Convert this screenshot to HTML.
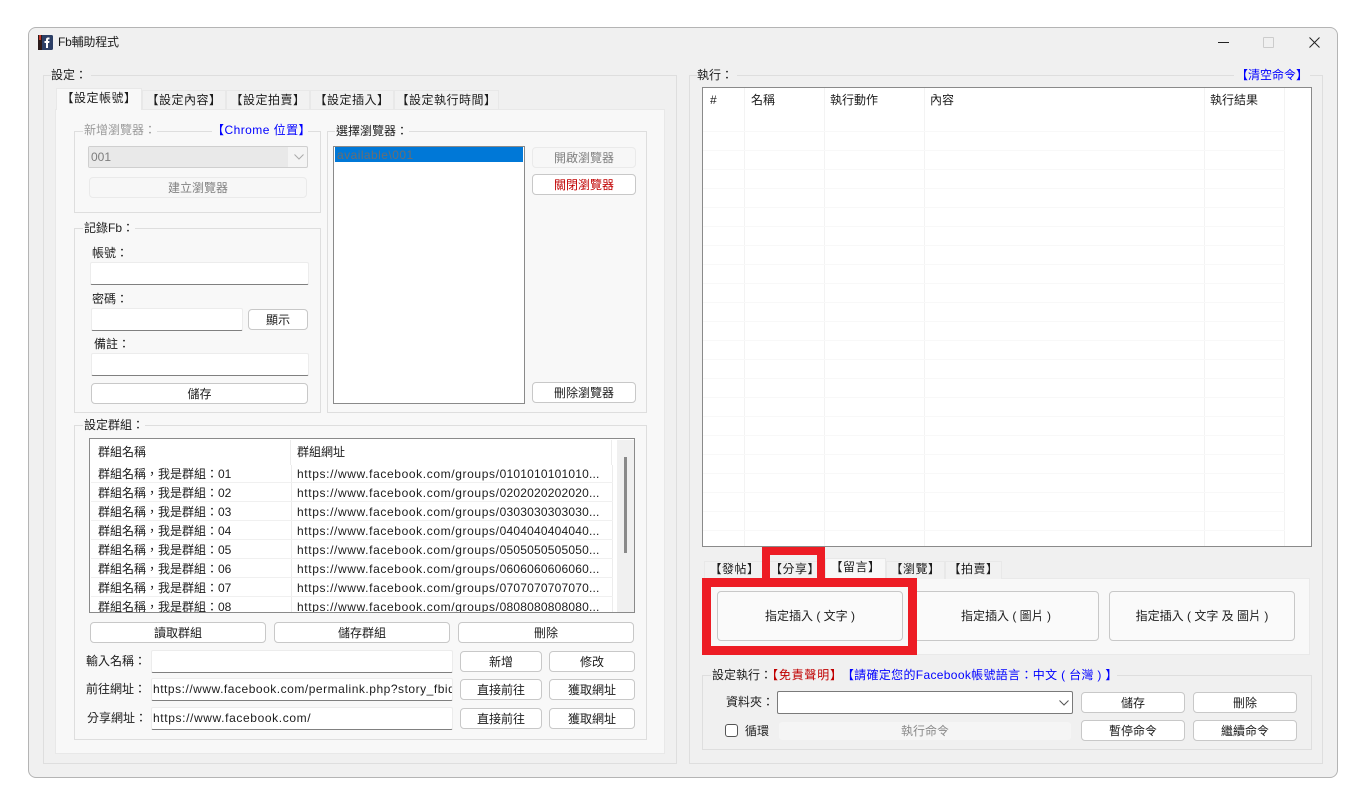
<!DOCTYPE html>
<html lang="zh-Hant"><head><meta charset="utf-8"><title>Fb輔助程式</title>
<style>
html,body{margin:0;padding:0;width:1366px;height:806px;overflow:hidden;background:#fff}
body{position:relative;font:12px/16px "Liberation Sans","Noto Sans CJK TC",sans-serif;color:#1c1c1c}
div,span{box-sizing:border-box}
.a{position:absolute}
.win{position:absolute;left:28px;top:27px;width:1310px;height:751px;background:#f0f0f0;border:1px solid #b4b4b4;border-radius:8px}
.g{position:absolute;border:1px solid #dedede}
.t{position:absolute;white-space:nowrap;height:16px;line-height:16px}
.l{background:#f0f0f0;padding:0 0 0 0}
.p{background:#f8f8f8}
.b{position:absolute;display:flex;align-items:center;justify-content:center;background:#fff;border:1px solid #c8c8c8;border-radius:4px;white-space:nowrap}
.d{background:#f7f7f7;border-color:#eaeaea;color:#808080}
.i{position:absolute;background:#fff;border:1px solid #ececec;border-bottom:1px solid #808080;border-radius:2px;white-space:nowrap;overflow:hidden;padding:2px 1px 0 1px;letter-spacing:.62px}
.tab{position:absolute;background:#f1f1f1;border:1px solid #e8e8e8;border-bottom:none;display:flex;align-items:center;justify-content:center;white-space:nowrap;letter-spacing:.5px}
.on{background:#f8f8f8;z-index:2}
.hl{position:absolute;background:#e6e6e6;height:1px}
.vl{position:absolute;background:#ececec;width:1px}
.u{letter-spacing:.62px}
.u span{letter-spacing:.2px}
.blue{color:#0000ff}.red{color:#c00000}
.r{position:absolute;background:#ed1c24;z-index:5}
</style></head><body>
<div class="win"></div>

<!-- title bar -->
<svg class="a" style="left:38px;top:35px" width="15" height="15" viewBox="0 0 15 15"><rect width="15" height="15" rx="1.5" fill="#2c3f66"/><rect width="4" height="15" fill="#2a1a1a"/><rect x="1" width="2" height="5" fill="#c0392b"/><path d="M8 13V8H6.5V6H8V4.6C8 3.2 8.9 2.5 10 2.5H11.5V4.4H10.6C10.2 4.4 10 4.6 10 5V6H11.5L11.2 8H10V13Z" fill="#fff"/></svg>
<div class="t" style="left:58px;top:34px;letter-spacing:-.2px">Fb輔助程式</div>
<div class="a" style="left:1218px;top:42px;width:11px;height:1px;background:#222"></div>
<div class="a" style="left:1263px;top:37px;width:11px;height:11px;border:1px solid #ccc;border-radius:1px"></div>
<svg class="a" style="left:1309px;top:37px" width="11" height="11" viewBox="0 0 11 11"><path d="M.5.5L10.5 10.5M10.5.5L.5 10.5" stroke="#222" fill="none"/></svg>

<!-- left outer group -->
<div class="g" style="left:43px;top:75px;width:634px;height:689px"></div>
<div class="t l" style="left:51px;top:67px;width:40px">設定：</div>
<div class="a p" style="left:55px;top:109px;width:610px;height:645px;border:1px solid #e8e8e8"></div>
<div class="tab on" style="left:56px;top:88px;width:86px;height:22px;padding-bottom:3px">【設定帳號】</div>
<div class="tab" style="left:142px;top:90px;width:84px;height:19px">【設定內容】</div>
<div class="tab" style="left:226px;top:90px;width:84px;height:19px">【設定拍賣】</div>
<div class="tab" style="left:310px;top:90px;width:84px;height:19px">【設定插入】</div>
<div class="tab" style="left:394px;top:90px;width:105px;height:19px">【設定執行時間】</div>

<!-- 新增瀏覽器 -->
<div class="g" style="left:74px;top:131px;width:247px;height:82px"></div>
<div class="t p" style="left:83px;top:122px;width:74px;color:#9a9a9a;padding-left:1px">新增瀏覽器：</div>
<div class="t p blue" style="left:212px;top:122px;width:96px;text-align:right;letter-spacing:.45px">【Chrome 位置】</div>
<div class="a" style="left:88px;top:146px;width:220px;height:22px;background:#f4f4f4;border:1px solid #cfcfcf;border-radius:2px"></div>
<div class="a" style="left:89px;top:147px;width:199px;height:20px;background:#e9e9e9"></div>
<div class="t" style="left:91px;top:149px;color:#7d7d7d">001</div>
<svg class="a" style="left:294px;top:154px" width="10" height="6" viewBox="0 0 10 6"><path d="M.5.5L5 5L9.5.5" stroke="#aaa" fill="none"/></svg>
<div class="b d" style="left:89px;top:177px;width:218px;height:21px">建立瀏覽器</div>

<!-- 選擇瀏覽器 -->
<div class="g" style="left:327px;top:131px;width:320px;height:282px"></div>
<div class="t p" style="left:335px;top:123px;width:74px;padding-left:1px">選擇瀏覽器：</div>
<div class="a" style="left:333px;top:146px;width:192px;height:258px;background:#fff;border:1px solid #8a8a8a"></div>
<div class="a" style="left:335px;top:147px;width:188px;height:15px;background:#0078d7"></div>
<div class="t" style="left:337px;top:147px;color:#6d6d6d;height:15px;line-height:16px;letter-spacing:.45px">available\001</div>
<div class="b d" style="left:532px;top:147px;width:104px;height:21px">開啟瀏覽器</div>
<div class="b" style="left:532px;top:174px;width:104px;height:21px;color:#c00000">關閉瀏覽器</div>
<div class="b" style="left:532px;top:382px;width:104px;height:21px">刪除瀏覽器</div>

<!-- 記錄Fb -->
<div class="g" style="left:74px;top:228px;width:247px;height:185px"></div>
<div class="t p" style="left:83px;top:220px;width:52px;padding-left:1px">記錄Fb：</div>
<div class="t" style="left:92px;top:245px">帳號：</div>
<div class="i" style="left:90px;top:262px;width:219px;height:23px"></div>
<div class="t" style="left:92px;top:291px">密碼：</div>
<div class="i" style="left:91px;top:308px;width:152px;height:23px"></div>
<div class="b" style="left:248px;top:309px;width:60px;height:21px">顯示</div>
<div class="t" style="left:94px;top:336px">備註：</div>
<div class="i" style="left:91px;top:353px;width:218px;height:23px"></div>
<div class="b" style="left:91px;top:383px;width:217px;height:21px">儲存</div>

<!-- 設定群組 -->
<div class="g" style="left:74px;top:425px;width:573px;height:315px"></div>
<div class="t p" style="left:83px;top:417px;width:62px;padding-left:1px">設定群組：</div>
<div class="a" style="left:89px;top:438px;width:546px;height:175px;background:#fff;border:1px solid #8a8a8a;overflow:hidden">
  <div class="a" style="left:527px;top:1px;width:17px;height:172px;background:#f0f0f0"></div>
  <div class="a" style="left:534px;top:18px;width:3px;height:96px;background:#8a8a8a"></div>
  <div class="vl" style="left:200px;top:1px;height:25px"></div>
  <div class="vl" style="left:201px;top:26px;height:148px"></div>
  <div class="vl" style="left:521px;top:1px;height:25px"></div>
  <div class="vl" style="left:522px;top:26px;height:148px"></div>
  <div class="hl" style="left:1px;top:43px;width:522px;background:#f0f0f0"></div>
  <div class="hl" style="left:1px;top:62px;width:522px;background:#f0f0f0"></div>
  <div class="hl" style="left:1px;top:81px;width:522px;background:#f0f0f0"></div>
  <div class="hl" style="left:1px;top:100px;width:522px;background:#f0f0f0"></div>
  <div class="hl" style="left:1px;top:119px;width:522px;background:#f0f0f0"></div>
  <div class="hl" style="left:1px;top:138px;width:522px;background:#f0f0f0"></div>
  <div class="hl" style="left:1px;top:157px;width:522px;background:#f0f0f0"></div>
  <div class="t" style="left:8px;top:5px">群組名稱</div><div class="t" style="left:207px;top:5px">群組網址</div>
  <div class="t" style="left:8px;top:27px">群組名稱，我是群組：01</div><div class="t u" style="left:207px;top:27px">https://www.facebook.com/groups/<span>0101010101010...</span></div>
  <div class="t" style="left:8px;top:46px">群組名稱，我是群組：02</div><div class="t u" style="left:207px;top:46px">https://www.facebook.com/groups/<span>0202020202020...</span></div>
  <div class="t" style="left:8px;top:65px">群組名稱，我是群組：03</div><div class="t u" style="left:207px;top:65px">https://www.facebook.com/groups/<span>0303030303030...</span></div>
  <div class="t" style="left:8px;top:84px">群組名稱，我是群組：04</div><div class="t u" style="left:207px;top:84px">https://www.facebook.com/groups/<span>0404040404040...</span></div>
  <div class="t" style="left:8px;top:103px">群組名稱，我是群組：05</div><div class="t u" style="left:207px;top:103px">https://www.facebook.com/groups/<span>0505050505050...</span></div>
  <div class="t" style="left:8px;top:122px">群組名稱，我是群組：06</div><div class="t u" style="left:207px;top:122px">https://www.facebook.com/groups/<span>0606060606060...</span></div>
  <div class="t" style="left:8px;top:141px">群組名稱，我是群組：07</div><div class="t u" style="left:207px;top:141px">https://www.facebook.com/groups/<span>0707070707070...</span></div>
  <div class="t" style="left:8px;top:160px">群組名稱，我是群組：08</div><div class="t u" style="left:207px;top:160px">https://www.facebook.com/groups/<span>0808080808080...</span></div>
</div>
<div class="b" style="left:90px;top:622px;width:176px;height:21px">讀取群組</div>
<div class="b" style="left:274px;top:622px;width:176px;height:21px">儲存群組</div>
<div class="b" style="left:458px;top:622px;width:176px;height:21px">刪除</div>
<div class="t" style="left:86px;top:653px">輸入名稱：</div>
<div class="i" style="left:151px;top:650px;width:302px;height:23px"></div>
<div class="b" style="left:460px;top:651px;width:82px;height:21px">新增</div>
<div class="b" style="left:549px;top:651px;width:86px;height:21px">修改</div>
<div class="t" style="left:86px;top:681px">前往網址：</div>
<div class="i" style="left:151px;top:678px;width:302px;height:23px;letter-spacing:.52px">https://www.facebook.com/permalink.php?story_fbid</div>
<div class="b" style="left:460px;top:679px;width:82px;height:21px">直接前往</div>
<div class="b" style="left:549px;top:679px;width:86px;height:21px">獲取網址</div>
<div class="t" style="left:87px;top:710px">分享網址：</div>
<div class="i" style="left:151px;top:707px;width:302px;height:23px">https://www.facebook.com/</div>
<div class="b" style="left:460px;top:708px;width:82px;height:21px">直接前往</div>
<div class="b" style="left:549px;top:708px;width:86px;height:21px">獲取網址</div>

<!-- right outer group -->
<div class="g" style="left:689px;top:75px;width:634px;height:689px"></div>
<div class="t l" style="left:697px;top:67px;width:40px">執行：</div>
<div class="t l blue" style="left:1234px;top:67px;width:76px;text-align:center">【清空命令】</div>
<div class="a" style="left:702px;top:87px;width:610px;height:460px;background:#fff;border:1px solid #8a8a8a;overflow:hidden" id="tbl">
  <div class="vl" style="left:41px;top:0;height:458px;background:#f3f3f3"></div>
  <div class="vl" style="left:121px;top:0;height:458px;background:#f3f3f3"></div>
  <div class="vl" style="left:221px;top:0;height:458px;background:#f3f3f3"></div>
  <div class="vl" style="left:501px;top:0;height:458px;background:#f3f3f3"></div>
  <div class="vl" style="left:581px;top:0;height:458px;background:#f3f3f3"></div>
  <div class="hl" style="left:0;top:43px;width:582px;background:#f8f8f8"></div>
  <div class="hl" style="left:0;top:62px;width:582px;background:#f8f8f8"></div>
  <div class="hl" style="left:0;top:81px;width:582px;background:#f8f8f8"></div>
  <div class="hl" style="left:0;top:100px;width:582px;background:#f8f8f8"></div>
  <div class="hl" style="left:0;top:119px;width:582px;background:#f8f8f8"></div>
  <div class="hl" style="left:0;top:138px;width:582px;background:#f8f8f8"></div>
  <div class="hl" style="left:0;top:157px;width:582px;background:#f8f8f8"></div>
  <div class="hl" style="left:0;top:176px;width:582px;background:#f8f8f8"></div>
  <div class="hl" style="left:0;top:195px;width:582px;background:#f8f8f8"></div>
  <div class="hl" style="left:0;top:214px;width:582px;background:#f8f8f8"></div>
  <div class="hl" style="left:0;top:233px;width:582px;background:#f8f8f8"></div>
  <div class="hl" style="left:0;top:252px;width:582px;background:#f8f8f8"></div>
  <div class="hl" style="left:0;top:271px;width:582px;background:#f8f8f8"></div>
  <div class="hl" style="left:0;top:290px;width:582px;background:#f8f8f8"></div>
  <div class="hl" style="left:0;top:309px;width:582px;background:#f8f8f8"></div>
  <div class="hl" style="left:0;top:328px;width:582px;background:#f8f8f8"></div>
  <div class="hl" style="left:0;top:347px;width:582px;background:#f8f8f8"></div>
  <div class="hl" style="left:0;top:366px;width:582px;background:#f8f8f8"></div>
  <div class="hl" style="left:0;top:385px;width:582px;background:#f8f8f8"></div>
  <div class="hl" style="left:0;top:404px;width:582px;background:#f8f8f8"></div>
  <div class="hl" style="left:0;top:423px;width:582px;background:#f8f8f8"></div>
  <div class="hl" style="left:0;top:442px;width:582px;background:#f8f8f8"></div>
  <div class="t" style="left:7px;top:4px">#</div>
  <div class="t" style="left:48px;top:4px">名稱</div>
  <div class="t" style="left:127px;top:4px">執行動作</div>
  <div class="t" style="left:227px;top:4px">內容</div>
  <div class="t" style="left:507px;top:4px">執行結果</div>
</div>

<!-- action tabs -->
<div class="a p" style="left:703px;top:578px;width:607px;height:77px;border:1px solid #e9e9e9"></div>
<div class="tab" style="left:704px;top:561px;width:61px;height:18px;padding-bottom:3px">【發帖】</div>
<div class="tab" style="left:765px;top:561px;width:60px;height:18px;padding-bottom:3px">【分享】</div>
<div class="tab on" style="left:825px;top:558px;width:61px;height:21px;padding-bottom:5px">【留言】</div>
<div class="tab" style="left:886px;top:561px;width:59px;height:18px;padding-bottom:3px">【瀏覽】</div>
<div class="tab" style="left:945px;top:561px;width:57px;height:18px;padding-bottom:3px">【拍賣】</div>
<div class="b" style="left:717px;top:591px;width:186px;height:50px;background:#fafafa">指定插入 ( 文字 )</div>
<div class="b" style="left:913px;top:591px;width:186px;height:50px;background:#fafafa">指定插入 ( 圖片 )</div>
<div class="b" style="left:1109px;top:591px;width:186px;height:50px;background:#fafafa">指定插入 ( 文字 及 圖片 )</div>

<!-- red highlight -->
<div class="r" style="left:702px;top:578px;width:215px;height:9px"></div>
<div class="r" style="left:702px;top:646px;width:215px;height:9px"></div>
<div class="r" style="left:702px;top:578px;width:9px;height:77px"></div>
<div class="r" style="left:908px;top:578px;width:9px;height:77px"></div>
<div class="r" style="left:762px;top:547px;width:63px;height:8px"></div>
<div class="r" style="left:762px;top:547px;width:8px;height:32px"></div>
<div class="r" style="left:817px;top:547px;width:8px;height:32px"></div>

<!-- 設定執行 -->
<div class="g" style="left:702px;top:675px;width:610px;height:75px"></div>
<div class="t l" style="left:711px;top:667px;width:406px;padding-left:1px">設定執行：<span style="color:#c00000;letter-spacing:.8px">【免責聲明】</span><span class="blue" style="letter-spacing:.33px;margin-left:5px">【請確定您的Facebook帳號語言：中文 ( 台灣 ) 】</span></div>
<div class="t" style="left:726px;top:694px">資料夾：</div>
<div class="a" style="left:777px;top:691px;width:296px;height:23px;background:#fff;border:1px solid #7a7a7a;border-radius:2px"></div>
<svg class="a" style="left:1059px;top:700px" width="10" height="6" viewBox="0 0 10 6"><path d="M.5.5L5 5L9.5.5" stroke="#555" fill="none"/></svg>
<div class="a" style="left:725px;top:724px;width:13px;height:13px;background:#fff;border:1px solid #555;border-radius:3px"></div>
<div class="t" style="left:745px;top:723px">循環</div>
<div class="b" style="left:778px;top:721px;width:294px;height:20px;background:#f5f5f5;border-color:#f0f0f0;color:#8a8a8a">執行命令</div>
<div class="b" style="left:1081px;top:692px;width:104px;height:21px">儲存</div>
<div class="b" style="left:1193px;top:692px;width:104px;height:21px">刪除</div>
<div class="b" style="left:1081px;top:720px;width:104px;height:21px">暫停命令</div>
<div class="b" style="left:1193px;top:720px;width:104px;height:21px">繼續命令</div>
</body></html>
